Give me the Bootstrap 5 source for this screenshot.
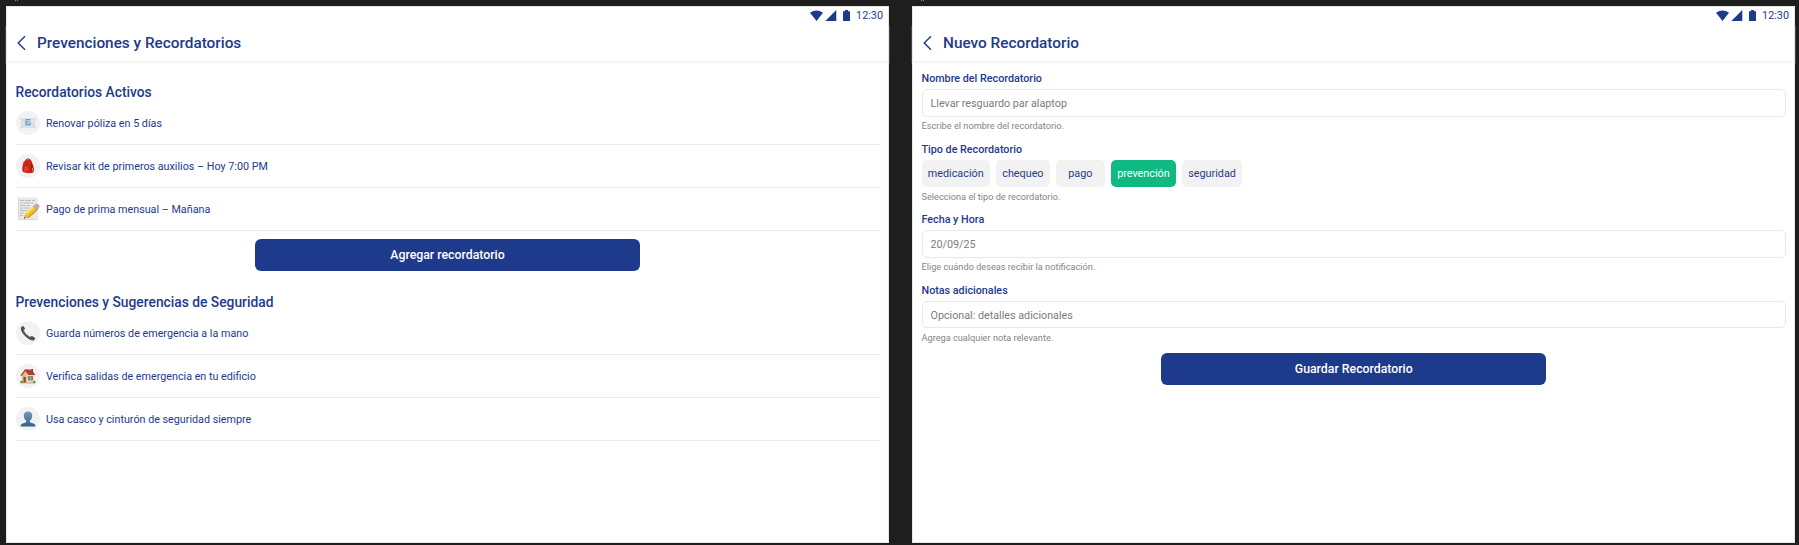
<!DOCTYPE html>
<html lang="es">
<head>
<meta charset="utf-8">
<meta name="viewport" content="width=device-width, initial-scale=1">
<title>Prevenciones y Recordatorios</title>
<link href="https://cdn.jsdelivr.net/npm/bootstrap@5.3.0/dist/css/bootstrap.min.css" rel="stylesheet">
<style>
  :root { --navy: #1e3a8a; --canvas: #1e1e1e; }
  body { background: var(--canvas); font-family: Roboto, sans-serif; color: var(--navy); height: 545px; overflow: hidden; }
  .board { padding: 0 4px 0 6px; gap: 23px; height: 545px; }
  .board-col { width: 883px; }
  .frame-tag { height: 6px; padding-left: 9px; }
  .frame-tag i { width: 1px; height: 1px; background: #8a8a8a; margin-right: 1px; }
  .screen { height: 537px; background: #fff; box-shadow: inset 0 0 0 1px #e6e6e6; }
  .status { height: 19px; padding: 0 6px 0 0; font-size: 10.8px; line-height: 19px; }
  .topbar { height: 37px; padding-left: 10px; border-bottom: 1px solid #f3f3f3; box-shadow: 0 1px 1px #f7f7f7; }
  .topbar h1 { font-size: 15.35px; font-weight: 500; line-height: 20px; margin: 0 0 0 11px; }
  .section-title { font-size: 13.8px; font-weight: 500; line-height: 18px; margin: 0; }
  .section-title.second { margin-top: 22px; }
  .entries { margin-top: 1px; }
  .entry { height: 43px; border-bottom: 1px solid #e8eaec; font-size: 10.75px; gap: 6.5px; }
  .entry-text { padding-top: 2px; }
  .bubble { width: 24px; height: 24px; background: #f2f2f2; }
  .main-btn { --bs-btn-color: #fff; --bs-btn-bg: var(--navy); --bs-btn-hover-bg: #172f73; --bs-btn-hover-color: #fff; width: 385px; height: 32px; font-size: 12.3px; font-weight: 500; padding: 0; border: 0; border-radius: 6px; }
  .add-row { margin-top: 8px; }
  .left-body { padding: 21px 9.5px 0 9.5px; }
  .right-body { padding: 10px 9px 0 9.5px; }
  .field-group { height: 70.6px; }
  .field-group:nth-child(4) { height: 69.4px; }
  .field-group label, .field-title { display: block; font-size: 10.75px; font-weight: 500; line-height: 14px; margin: 0 0 3px; }
  .field-group .form-control { height: 27.5px; font-size: 10.75px; padding: 1px 8px 0; border: 1px solid #e8e8e8; border-radius: 5px; color: #7c7c7c; }
  .field-group .form-text { font-size: 9.2px; line-height: 12px; margin: 3.5px 0 0; color: #858585; }
  .chips { gap: 6px; }
  .chip { height: 27.5px; min-width: 49px; padding: 1px 6.3px 0; font-size: 10.8px; border: 0; border-radius: 5px; background: #f2f2f3; color: var(--navy); }
  .chip.active { background: #10b981 !important; color: #fff !important; }
</style>
</head>
<body>
<div class="board d-flex">
  <div class="board-col">
    <div class="frame-tag d-flex"><i></i><i></i></div>
    <main class="screen">
      <div class="status d-flex justify-content-end align-items-center">
        <svg class="me-1" width="42" height="12" viewBox="0 0 42 12" fill="#1e3a8a"><path d="M0 2.8Q6.5-2 13 2.8L6.500 11ZM26.300 0V11H15.300ZM33 1.200h2V0h3v1.200h2V11h-7Z"/></svg>
        <span>12:30</span>
      </div>
      <header class="topbar d-flex align-items-center">
        <svg width="10" height="16" viewBox="0 0 10 16" fill="none" stroke="#1e3a8a" stroke-width="1.400"><path d="M9 1.300 2.200 8 9 14.700"/></svg>
        <h1>Prevenciones y Recordatorios</h1>
      </header>
      <div class="left-body">
        <h2 class="section-title">Recordatorios Activos</h2>
        <div class="entries">
          <div class="entry d-flex align-items-center">
            <span class="bubble rounded-circle d-flex align-items-center justify-content-center">
              <svg width="16" height="12" viewBox="0 0 16 12"><rect x=".5" y="1" width="15" height="10" fill="#dfe3e8"/><path d="M.5 1 8 7l7.500-6M.5 11 6 6M15.500 11 10 6" fill="none" stroke="#bfc5cc" stroke-width=".7"/><rect x="5.500" y="2" width="5" height="6.500" fill="#5e9fd4"/><path d="M6.500 3.500h3M6.500 5h2M6.500 6.800h3" stroke="#d7ebf8" stroke-width=".8"/><path d="M8.500 5.500 14 2.500" stroke="#f2f4f6"/></svg>
            </span>
            <span class="entry-text">Renovar póliza en 5 días</span>
          </div>
          <div class="entry d-flex align-items-center">
            <span class="bubble rounded-circle d-flex align-items-center justify-content-center">
              <svg width="14" height="16" viewBox="0 0 14 16"><path d="M4.500 3Q5 .5 7.500 1T10 3.500" fill="none" stroke="#8d1d19" stroke-width="1"/><path d="M2.500 4Q6.500 .3 10.500 3L12 7l1 4-1 3.500Q7 16 2 14 .8 12 1.300 9Z" fill="#d3261e"/><path d="M9.500 4.500Q12 6 11.500 9L13 12q0 3-3 2.500Z" fill="#9f1e1b"/><path d="M3 8q3-1 5 .8v4.500q-3 1-5.500 0ZM5 4l2 3" fill="#e23a31" stroke="#a51a18" stroke-width=".5"/><path d="m11.500 10 .7 4.500" stroke="#d5a79b" stroke-width=".8"/></svg>
            </span>
            <span class="entry-text">Revisar kit de primeros auxilios – Hoy 7:00 PM</span>
          </div>
          <div class="entry d-flex align-items-center">
            <svg width="24" height="24" viewBox="0 0 24 24"><path d="M2 .5h20V23H2Z" fill="#e8e9e8"/><path d="M2.400 1v21.600H22" fill="none" stroke="#cfcfcf" stroke-width=".7"/><path d="M4 3.500h4m1 0h6m1 0h3M4 6h2m1 0h7m1 0h2M4 8.500h6m1 0h3M4 11h3m1 0h5M4 13.500h7M4 16h4M4 18.500h3" stroke="#a3a6a8" stroke-width=".7"/><path d="m8 21.500 1.300-5L18 8.500l4 4-9 8Z" fill="#f3bd22"/><path d="m9.300 16.500 8.700-8 1.500 1.500-9 8Z" fill="#ffdd53"/><path d="m12 21 9.500-8.500" stroke="#bd8115"/><path d="m17 9.400 2-1.800 3.800 4-2 1.800Z" fill="#a9b1b5"/><path d="m19 7.600 1-.6q2-.5 3 1.200t0 3.100Z" fill="#e68b86"/><path d="m8 21.500.9-3 2.400 2.100Z" fill="#d9b084"/><path d="m8 21.500.4-1.400 1 .9Z" fill="#343434"/></svg>
            <span class="entry-text">Pago de prima mensual – Mañana</span>
          </div>
        </div>
        <div class="add-row d-flex justify-content-center"><button class="btn main-btn">Agregar recordatorio</button></div>
        <h2 class="section-title second">Prevenciones y Sugerencias de Seguridad</h2>
        <div class="entries">
          <div class="entry d-flex align-items-center">
            <span class="bubble rounded-circle d-flex align-items-center justify-content-center">
              <svg width="16" height="16" viewBox="0 0 16 16"><path d="M1 2.300 3 1q1 0 2 2.800l-1.300 1.600Q5.500 9.500 10 12l1.800-1q3 1.200 3.500 2.400L14 15.300Q11 16.500 5.500 11.500T1 2.300Z" fill="#444648"/><path d="M2.500 2.500Q3 8 7 11.400t6.500 3" fill="none" stroke="#73777a" stroke-width=".7"/></svg>
            </span>
            <span class="entry-text">Guarda números de emergencia a la mano</span>
          </div>
          <div class="entry d-flex align-items-center">
            <span class="bubble rounded-circle d-flex align-items-center justify-content-center">
              <svg width="16" height="16" viewBox="0 0 16 16"><path d="M2 7 5 2.500 13.800 6.500v8H2Z" fill="#ecd3ab"/><path d="M5 3 2 8v6.500h4.500V6Z" fill="#dcbd8e"/><path d="M11.200 1h1.800v4h-1.800Z" fill="#8d3528"/><path d="m.6 7.300 4.400-6L11.800 1.800 15.300 7H8.500L5.200 3.300 1.500 8.200Z" fill="#ad412e"/><path d="M3.500 9h2.300v5.700H3.500Z" fill="#894b2d"/><path d="M8.500 8.500h4V12h-4Z" fill="#6790ad" stroke="#80624b" stroke-width=".7"/><path d="M10.500 8.500V12" stroke="#dbe5e9" stroke-width=".5"/><path d="M1.500 14.900h13" stroke="#a98e72" stroke-width=".8"/><circle cx="1.500" cy="14" r="1.300" fill="#5f9138"/><circle cx="14.300" cy="14" r="1.300" fill="#5f9138"/></svg>
            </span>
            <span class="entry-text">Verifica salidas de emergencia en tu edificio</span>
          </div>
          <div class="entry d-flex align-items-center">
            <span class="bubble rounded-circle d-flex align-items-center justify-content-center">
              <svg width="16" height="16" viewBox="0 0 16 16"><defs><linearGradient id="bust" x2="0" y2="1"><stop stop-color="#719abd"/><stop offset="1" stop-color="#365f87"/></linearGradient></defs><path d="M8 .5q4.300 0 4.200 4.500-.2 3.300-2.300 4.700v1.500l3.600 1.300q2 .7 2 3H.5q0-2.300 2-3l3.600-1.300V9.700Q4 8.300 3.800 5 3.700.5 8 .5Z" fill="url(#bust)"/></svg>
            </span>
            <span class="entry-text">Usa casco y cinturón de seguridad siempre</span>
          </div>
        </div>
      </div>
    </main>
  </div>

  <div class="board-col">
    <div class="frame-tag d-flex"><i></i><i></i></div>
    <main class="screen">
      <div class="status d-flex justify-content-end align-items-center">
        <svg class="me-1" width="42" height="12" viewBox="0 0 42 12" fill="#1e3a8a"><path d="M0 2.8Q6.5-2 13 2.8L6.500 11ZM26.300 0V11H15.300ZM33 1.200h2V0h3v1.200h2V11h-7Z"/></svg>
        <span>12:30</span>
      </div>
      <header class="topbar d-flex align-items-center">
        <svg width="10" height="16" viewBox="0 0 10 16" fill="none" stroke="#1e3a8a" stroke-width="1.400"><path d="M9 1.300 2.200 8 9 14.700"/></svg>
        <h1>Nuevo Recordatorio</h1>
      </header>
      <form class="right-body">
        <div class="field-group">
          <label for="nombre">Nombre del Recordatorio</label>
          <input id="nombre" class="form-control" value="Llevar resguardo par alaptop">
          <div class="form-text">Escribe el nombre del recordatorio.</div>
        </div>
        <div class="field-group">
          <div class="field-title">Tipo de Recordatorio</div>
          <div class="chips d-flex">
            <button type="button" class="btn chip">medicación</button>
            <button type="button" class="btn chip">chequeo</button>
            <button type="button" class="btn chip">pago</button>
            <button type="button" class="btn chip active">prevención</button>
            <button type="button" class="btn chip">seguridad</button>
          </div>
          <div class="form-text">Selecciona el tipo de recordatorio.</div>
        </div>
        <div class="field-group">
          <label for="fecha">Fecha y Hora</label>
          <input id="fecha" class="form-control" value="20/09/25">
          <div class="form-text">Elige cuándo deseas recibir la notificación.</div>
        </div>
        <div class="field-group">
          <label for="notas">Notas adicionales</label>
          <input id="notas" class="form-control" value="Opcional: detalles adicionales">
          <div class="form-text">Agrega cualquier nota relevante.</div>
        </div>
        <div class="d-flex justify-content-center"><button type="button" class="btn main-btn">Guardar Recordatorio</button></div>
      </form>
    </main>
  </div>
</div>
<script src="https://cdn.jsdelivr.net/npm/bootstrap@5.3.0/dist/js/bootstrap.bundle.min.js"></script>
</body>
</html>
